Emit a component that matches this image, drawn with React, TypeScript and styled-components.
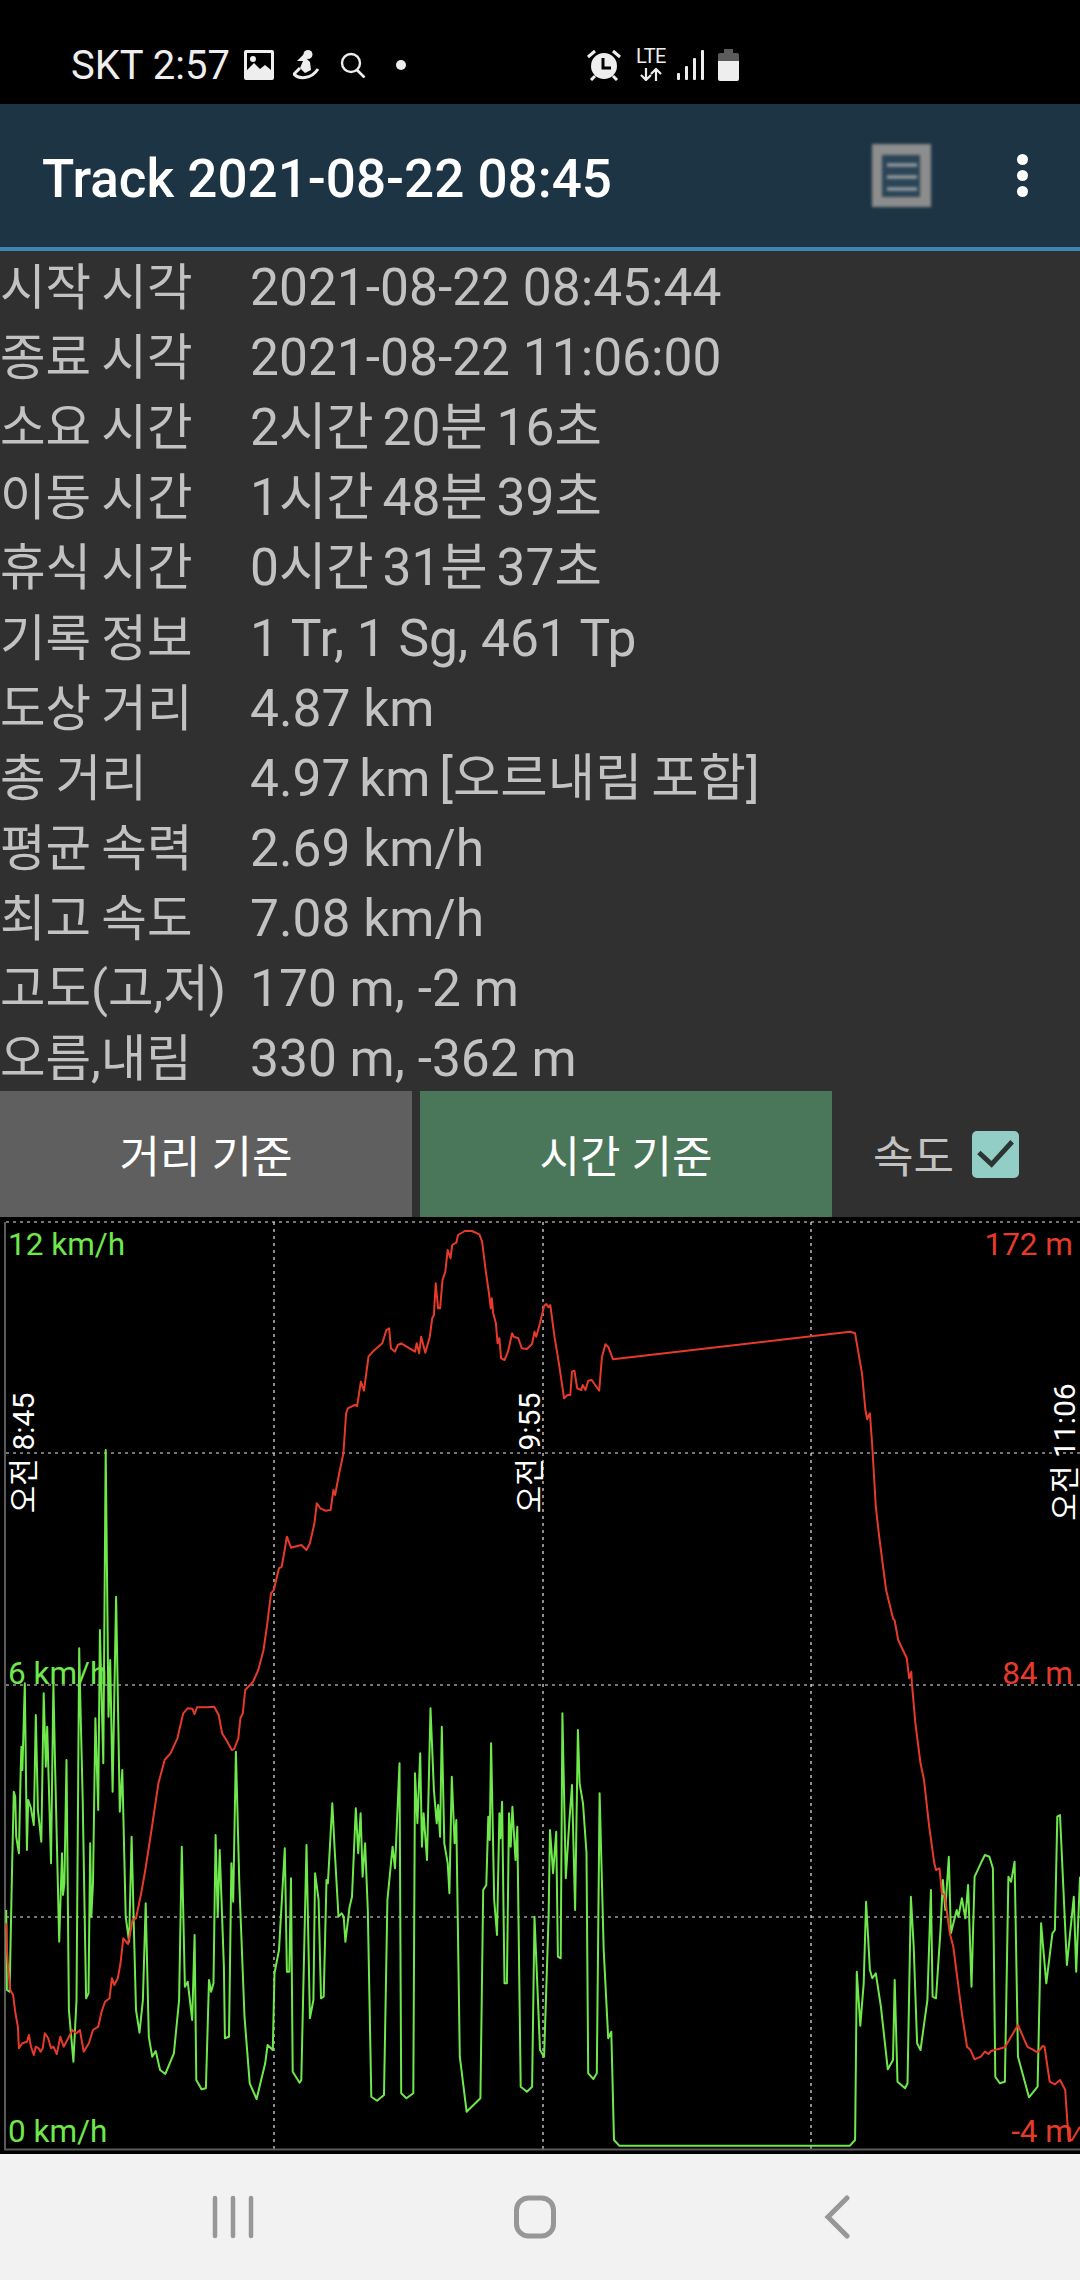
import React from "react";
import styled, { createGlobalStyle } from "styled-components";

// Chart traces were sampled on a 1568x1500 grid per tile of the chart area.
type Tile = [number, number, number[]];

const CHART_TOP = 1217;
const TILE_SCALE_X = 540 / 1568;

const toPoints = (tiles: Tile[]) =>
    tiles
        .map(([ox, oy, values]) => {
            const out: string[] = [];
            for (let i = 0; i < values.length; i += 2) {
                const x = ox + values[i] * TILE_SCALE_X;
                const y = oy + values[i + 1] / 3 - CHART_TOP;
                out.push(`${x.toFixed(1)},${y.toFixed(1)}`);
            }
            return out.join(" ");
        })
        .join(" ");

const altitude: Tile[] = [
    [0, 1650, [
        18,820, 20,900, 24,960, 30,1020, 38,1035, 44,1085, 52,1130, 55,1195, 65,1180, 78,1175, 84,1155, 90,1190,
        98,1215, 104,1190, 112,1195, 118,1205, 124,1195, 130,1150, 140,1165, 148,1195, 155,1190, 165,1212, 175,1160,
        185,1190, 198,1165, 210,1140, 222,1150, 232,1140, 243,1205, 258,1180, 270,1140, 285,1130, 295,1085, 305,1055,
        318,1045, 325,985, 332,1005, 342,985, 350,940, 358,865, 372,882, 385,810, 395,805, 410,730, 422,660, 440,540,
        460,400, 478,330, 495,310, 515,265, 532,190, 545,175, 558,176, 565,192, 572,172, 600,172, 622,170, 635,195,
        645,250, 660,275, 673,300, 680,297, 692,265, 698,205, 705,190, 712,120, 735,95, 750,60, 765,0,
    ]],
    [0, 1200, [
        775,1280, 787,1180, 795,1170, 810,1105, 818,1100, 825,1060, 833,1010, 845,1043, 875,1035, 890,1050, 900,1030,
        913,970, 920,910, 930,925, 945,932, 960,930, 968,870, 973,885, 985,820, 997,760, 1005,640, 1010,625, 1030,615,
        1037,618, 1048,545, 1057,572, 1070,470, 1085,452, 1110,430, 1122,390, 1130,385, 1135,445, 1147,455, 1155,435,
        1165,430, 1205,455, 1210,430, 1217,460, 1223,410, 1235,458, 1248,410, 1255,355, 1260,345, 1265,250, 1272,325,
        1278,325, 1285,240, 1293,215, 1300,150, 1308,175, 1313,135, 1325,128, 1330,105, 1350,93, 1370,93, 1392,103,
        1400,125, 1410,210, 1420,280, 1425,325, 1428,295, 1432,340, 1440,370, 1445,430, 1450,415, 1455,475, 1465,480,
        1475,455, 1487,400, 1492,410, 1505,415, 1515,445, 1530,447, 1545,432, 1552,395, 1557,410, 1568,370,
    ]],
    [540, 1200, [
        12,318, 18,312, 25,322, 30,315, 42,410, 55,490, 70,595, 80,585, 88,585, 93,515, 100,512, 108,565, 120,570,
        124,555, 132,570, 140,542, 150,540, 172,572, 180,470, 190,433, 198,440, 212,478, 900,395, 915,400, 920,430,
        935,520, 945,630, 950,658, 955,645, 958,640, 965,740, 975,920, 985,1010, 1005,1170, 1025,1255, 1030,1262,
        1040,1320, 1065,1375, 1072,1435, 1078,1415, 1080,1450,
    ]],
    [540, 1650, [
        1080,100, 1090,220, 1105,340, 1115,390, 1130,530, 1145,640, 1150,660, 1160,655, 1167,730, 1175,735, 1190,850,
        1200,890, 1210,970, 1225,1090, 1240,1190, 1250,1200, 1262,1228, 1280,1220, 1292,1205, 1302,1212, 1310,1203,
        1350,1192, 1388,1125, 1415,1190, 1445,1207, 1460,1188, 1465,1190, 1480,1295, 1495,1303, 1510,1290, 1525,1320,
        1535,1470, 1545,1470, 1568,1430,
    ]],
];

const speed: Tile[] = [
    [0, 1650, [
        18,780, 20,1020, 28,1025, 35,650, 40,425, 44,440, 47,560, 55,610, 60,360, 62,290, 65,360, 72,100, 78,600,
        82,450, 90,475, 98,525, 104,195, 110,480, 120,575, 127,130, 133,350, 137,230, 148,640, 155,100, 160,350,
        172,875, 180,610, 183,735, 187,700, 193,330, 200,1080, 213,1235, 222,1050, 230,-5, 232,100, 240,450, 250,1045,
        257,1030, 262,580, 265,800, 270,700, 277,205, 285,480, 290,-60, 300,340, 307,-600, 315,200, 320,30, 327,425,
        337,-160, 348,485, 355,360, 365,800, 375,875, 382,560, 388,800, 395,1080, 405,1148, 415,1050, 423,760, 432,1160,
        442,1220, 452,1203, 465,1260, 480,1272, 505,1210, 520,1050, 528,590, 537,1010, 545,995, 558,1110, 565,855,
        570,1290, 585,1318, 598,1315, 607,990, 613,1025, 620,1000, 626,555, 632,800, 638,600, 650,950, 653,1165,
        665,1160, 672,640, 677,755, 685,305, 695,700, 710,1100, 725,1300, 745,1347, 770,1240, 777,1185, 792,1200,
        797,970, 810,900, 827,595, 833,965, 840,965, 845,685, 850,1265, 870,1298, 875,1290, 890,585, 900,1105, 910,1050,
        915,670, 925,750, 932,1045, 940,1040, 948,690, 952,700, 965,460, 972,600, 983,800, 992,790, 998,800, 1003,875,
        1015,770, 1022,740, 1033,475, 1040,610, 1047,490, 1053,680, 1060,580, 1068,780, 1078,1340, 1095,1352, 1115,1335,
        1125,750, 1140,590, 1147,655, 1160,340, 1165,1330, 1180,1345, 1200,1330, 1205,370, 1212,520, 1220,310, 1225,590,
        1230,490, 1240,630, 1250,175, 1260,420, 1268,520, 1272,465, 1278,560, 1283,230, 1290,580, 1300,640, 1305,730,
        1312,380, 1320,580, 1325,510, 1335,1220, 1355,1385, 1395,1345, 1403,720, 1412,705, 1418,500, 1422,570, 1426,280,
        1435,750, 1443,855, 1450,490, 1453,565, 1458,455, 1465,1000, 1472,1000, 1478,490, 1483,590, 1488,470, 1497,630,
        1502,530, 1512,1310, 1530,1325, 1545,1310, 1552,800, 1568,1200,
    ]],
    [540, 1650, [
        12,1220, 25,800, 29,540, 38,670, 47,545, 52,920, 60,925, 65,190, 75,685, 85,515, 93,405, 102,780, 110,240,
        115,400, 125,460, 135,610, 140,1270, 155,1287, 165,1270, 173,430, 185,900, 198,1165, 207,1145, 215,1470,
        230,1487, 900,1487, 915,1470, 920,965, 930,1127, 940,1000, 947,755, 958,960, 965,985, 975,970, 990,1070,
        1010,1258, 1025,1230, 1030,990, 1038,1295, 1060,1315, 1067,1300, 1077,740, 1085,890, 1095,1180, 1105,1200,
        1125,1050, 1135,720, 1140,1040, 1150,1045, 1163,840, 1170,690, 1177,780, 1187,620, 1193,850, 1210,780, 1215,800,
        1225,745, 1235,805, 1243,705, 1253,1010, 1262,680, 1280,640, 1292,615, 1305,620, 1315,655, 1322,1280, 1335,1300,
        1350,1295, 1360,680, 1368,695, 1378,635, 1388,1220, 1420,1342, 1445,1310, 1455,820, 1470,1000, 1488,850,
        1495,840, 1502,500, 1510,495, 1530,945, 1550,740, 1557,965, 1568,680,
    ]],
];

const infoRows = [
    ["시작 시각", "2021-08-22 08:45:44"],
    ["종료 시각", "2021-08-22 11:06:00"],
    ["소요 시간", "2시간 20분 16초"],
    ["이동 시간", "1시간 48분 39초"],
    ["휴식 시간", "0시간 31분 37초"],
    ["기록 정보", "1 Tr, 1 Sg, 461 Tp"],
    ["도상 거리", "4.87 km"],
    ["총 거리", "4.97 km [오르내림 포함]"],
    ["평균 속력", "2.69 km/h"],
    ["최고 속도", "7.08 km/h"],
    ["고도(고,저)", "170 m, -2 m"],
    ["오름,내림", "330 m, -362 m"],
];

const hasHangul = (text: string) => /[가-힣]/.test(text);

const gridRows = [5, 236, 468, 700];
const gridCols = [274, 543, 811];

export default function App() {
    return (
        <>
            <GlobalStyle />
            <Screen>
                <StatusBar>
                    <Carrier>SKT 2:57</Carrier>
                    <PictureIcon viewBox="0 0 30 30">
                        <path
                            fillRule="evenodd"
                            d="M2 0h26a2 2 0 0 1 2 2v26a2 2 0 0 1-2 2H2a2 2 0 0 1-2-2V2a2 2 0 0 1 2-2zM3 3v17l7-7 6 6 5-4 6 5V3z"
                            fill="#eee"
                        />
                        <circle cx="9" cy="9" r="3" fill="#eee" />
                    </PictureIcon>
                    <FigureIcon viewBox="0 0 27 30">
                        <circle cx="15" cy="4.5" r="4.5" fill="#eee" />
                        <path d="M11 4 4 11h6l-3 7 5 5 6-3-1-8-3-3z" fill="#eee" />
                        <path d="M7 18 1 24c4 5 17 6 24-5" fill="none" stroke="#eee" strokeWidth="3" />
                    </FigureIcon>
                    <SearchIcon viewBox="0 0 26 26">
                        <circle cx="11" cy="11" r="9" fill="none" stroke="#eee" strokeWidth="2.4" />
                        <path d="m17 18 7.5 7.5" stroke="#eee" strokeWidth="2.6" />
                    </SearchIcon>
                    <StatusDot />
                    <SystemIcons>
                        <AlarmIcon viewBox="0 0 34 32">
                            <circle cx="17" cy="17" r="13" fill="#eee" />
                            <path d="M1 8 8 2M33 8l-7-6M8 27l-4 4M26 27l4 4" stroke="#eee" strokeWidth="3" />
                            <path d="M16 9v10h8" fill="none" stroke="#000" strokeWidth="3" />
                        </AlarmIcon>
                        <NetworkBadge>
                            <NetworkText>LTE</NetworkText>
                            <ArrowsIcon viewBox="0 0 24 13">
                                <path d="M7 0v11M2 7l5 5 5-5M17 13V2M12 6l5-5 5 5" fill="none" stroke="#eee" strokeWidth="2.2" />
                            </ArrowsIcon>
                        </NetworkBadge>
                        <SignalIcon viewBox="0 0 28 30">
                            <rect x="0" y="23" width="3" height="7" rx="1" fill="#eee" />
                            <rect x="8" y="16" width="3" height="14" rx="1" fill="#eee" />
                            <rect x="16" y="8" width="3" height="22" rx="1" fill="#eee" />
                            <rect x="24" y="0" width="3" height="30" rx="1" fill="#eee" />
                        </SignalIcon>
                        <BatteryIcon viewBox="0 0 21 32">
                            <path d="M6 0h9v4h4a2 2 0 0 1 2 2v7H0V6a2 2 0 0 1 2-2h4z" fill="#5b5b5b" />
                            <path d="M0 12h21v18a2 2 0 0 1-2 2H2a2 2 0 0 1-2-2z" fill="#eee" />
                        </BatteryIcon>
                    </SystemIcons>
                </StatusBar>

                <ActionBar>
                    <Title>Track 2021-08-22 08:45</Title>
                    <ListButton viewBox="0 0 59 63">
                        <rect width="59" height="63" fill="#8d8d8d" />
                        <rect x="10" y="11" width="38" height="42" fill="#2b4557" />
                        <path d="M15 21h30M15 33h30M15 45h30" stroke="#a4a8aa" strokeWidth="3" />
                    </ListButton>
                    <OverflowButton>
                        <OverflowDot />
                        <OverflowDot />
                        <OverflowDot />
                    </OverflowButton>
                </ActionBar>

                <InfoList>
                    {infoRows.map(([label, value]) => (
                        <InfoRow key={label}>
                            <InfoLabel>{label}</InfoLabel>
                            <InfoValue $tight={hasHangul(value)}>{value}</InfoValue>
                        </InfoRow>
                    ))}
                </InfoList>

                <ModeBar>
                    <ModeButton>거리 기준</ModeButton>
                    <ModeButton $active>시간 기준</ModeButton>
                    <SpeedToggle>
                        속도
                        <CheckBox viewBox="0 0 48 48">
                            <rect width="48" height="48" rx="5" fill="#92cdc6" />
                            <path d="m7 22 13 12L41 11" fill="none" stroke="#2d3436" strokeWidth="5" />
                        </CheckBox>
                    </SpeedToggle>
                </ModeBar>

                <Chart>
                    <Plot>
                        {gridRows.map((y) => (
                            <GridLine key={y} x1={6} x2={1080} y1={y} y2={y} />
                        ))}
                        {gridCols.map((x) => (
                            <GridLine key={x} x1={x} x2={x} y1={5} y2={932} />
                        ))}
                        <Axis d="M5 5V932.5H1080" />
                        <Trace points={toPoints(speed)} stroke="#6fe84b" />
                        <Trace points={toPoints(altitude)} stroke="#e63a2a" />
                    </Plot>
                    <SpeedLabel $top={8}>12 km/h</SpeedLabel>
                    <SpeedLabel $top={437}>6 km/h</SpeedLabel>
                    <SpeedLabel $top={895}>0 km/h</SpeedLabel>
                    <AltitudeLabel $top={8}>172 m</AltitudeLabel>
                    <AltitudeLabel $top={437}>84 m</AltitudeLabel>
                    <AltitudeLabel $top={895}>-4 m</AltitudeLabel>
                    <TimeLabel $x={24} $y={236}>오전 8:45</TimeLabel>
                    <TimeLabel $x={530} $y={236}>오전 9:55</TimeLabel>
                    <TimeLabel $x={1065} $y={235}>오전 11:06</TimeLabel>
                </Chart>

                <NavBar>
                    <NavIcon viewBox="0 0 42 44">
                        <path d="M3 3v38M21 3v38M39 3v38" fill="none" stroke="#979797" strokeWidth="4.5" strokeLinecap="round" />
                    </NavIcon>
                    <NavIcon viewBox="0 0 42 44">
                        <rect x="2.5" y="3" width="37" height="38" rx="12" fill="none" stroke="#979797" strokeWidth="5" />
                    </NavIcon>
                    <NavIcon viewBox="0 0 42 44">
                        <path d="M31 3 12 22l19 19" fill="none" stroke="#979797" strokeWidth="5" strokeLinecap="round" />
                    </NavIcon>
                </NavBar>
            </Screen>
        </>
    );
}

const GlobalStyle = createGlobalStyle`
    html, body {
        margin: 0;
        padding: 0;
        background: #000;
    }
`;

const Screen = styled.div`
    width: 1080px;
    height: 2280px;
    display: flex;
    flex-direction: column;
    background-color: #303030;
    font-family: Roboto, "Noto Sans CJK KR", sans-serif;
    overflow: hidden;
`;

const StatusBar = styled.div`
    height: 104px;
    flex: none;
    box-sizing: border-box;
    display: flex;
    align-items: center;
    padding: 26px 0 0 71px;
    background-color: #000;
`;

const Carrier = styled.span`
    width: 173px;
    color: #eee;
    font-size: 40px;
    white-space: nowrap;
`;

const PictureIcon = styled.svg`
    width: 30px;
    height: 30px;
    flex: none;
`;

const FigureIcon = styled.svg`
    width: 27px;
    height: 30px;
    flex: none;
    margin-left: 19px;
`;

const SearchIcon = styled.svg`
    width: 26px;
    height: 26px;
    flex: none;
    margin-left: 20px;
`;

const StatusDot = styled.span`
    width: 10px;
    height: 10px;
    flex: none;
    margin-left: 30px;
    border-radius: 50%;
    background-color: #eee;
`;

const SystemIcons = styled.div`
    display: flex;
    align-items: center;
    margin-left: 181px;
`;

const AlarmIcon = styled.svg`
    width: 34px;
    height: 32px;
`;

const NetworkBadge = styled.div`
    width: 30px;
    margin-left: 15px;
    display: flex;
    flex-direction: column;
    align-items: center;
    gap: 4px;
`;

const NetworkText = styled.span`
    color: #eee;
    font-size: 20px;
    line-height: 15px;
    letter-spacing: -0.5px;
`;

const ArrowsIcon = styled.svg`
    width: 24px;
    height: 13px;
`;

const SignalIcon = styled.svg`
    width: 28px;
    height: 30px;
    margin-left: 11px;
`;

const BatteryIcon = styled.svg`
    width: 21px;
    height: 32px;
    margin-left: 13px;
`;

const ActionBar = styled.div`
    height: 143px;
    flex: none;
    display: flex;
    align-items: center;
    padding-left: 42px;
    background-color: #1d3445;
    border-bottom: 4px solid #3d86b4;
`;

const Title = styled.h1`
    flex: 1;
    margin: 6px 0 0;
    color: #fff;
    font-size: 53px;
    font-weight: 500;
    white-space: nowrap;
`;

const ListButton = styled.svg`
    width: 59px;
    height: 63px;
    flex: none;
    filter: blur(1.4px);
`;

const OverflowButton = styled.div`
    width: 11px;
    flex: none;
    margin: 0 52px 0 86px;
    display: flex;
    flex-direction: column;
    gap: 5px;
`;

const OverflowDot = styled.span`
    width: 11px;
    height: 11px;
    border-radius: 50%;
    background-color: #fff;
`;

const InfoList = styled.div`
    height: 840px;
    flex: none;
    box-sizing: border-box;
    padding-top: 2px;
    display: flex;
    flex-direction: column;
`;

const InfoRow = styled.div`
    height: 70.1px;
    flex: none;
    display: grid;
    grid-template-columns: 250px 1fr;
    align-items: center;
`;

const InfoLabel = styled.span`
    color: #c2c2c2;
    font-size: 49.5px;
    line-height: 60px;
    word-spacing: -2px;
    white-space: nowrap;
`;

const InfoValue = styled.span<{ $tight: boolean }>`
    color: #c2c2c2;
    font-size: 51.5px;
    line-height: 60px;
    word-spacing: ${({ $tight }) => ($tight ? "-4px" : "0")};
    white-space: nowrap;
`;

const ModeBar = styled.div`
    height: 126px;
    flex: none;
    display: flex;
    gap: 8px;
`;

const ModeButton = styled.div<{ $active?: boolean }>`
    width: 412px;
    display: flex;
    align-items: center;
    justify-content: center;
    color: #fff;
    font-size: 44px;
    background-color: ${({ $active }) => ($active ? "#4a7759" : "#5f5f5f")};
`;

const SpeedToggle = styled.div`
    flex: 1;
    display: flex;
    align-items: center;
    padding-left: 33px;
    gap: 18px;
    color: #c2c2c2;
    font-size: 44px;
`;

const CheckBox = styled.svg`
    width: 47px;
    height: 47px;
    flex: none;
`;

const Chart = styled.div`
    position: relative;
    flex: 1;
    background-color: #000;
    overflow: hidden;
`;

const Plot = styled.svg`
    position: absolute;
    inset: 0;
    width: 100%;
    height: 100%;
`;

const GridLine = styled.line`
    stroke: #e8e8e8;
    stroke-width: 1.2;
    stroke-dasharray: 3 4;
`;

const Axis = styled.path`
    fill: none;
    stroke: #5a5a5a;
    stroke-width: 2;
`;

const Trace = styled.polyline`
    fill: none;
    stroke-width: 2;
    stroke-linejoin: round;
`;

const SpeedLabel = styled.span<{ $top: number }>`
    position: absolute;
    left: 8px;
    top: ${({ $top }) => $top}px;
    color: #6fe84b;
    font-size: 31.5px;
    line-height: 40px;
    white-space: nowrap;
`;

const AltitudeLabel = styled.span<{ $top: number }>`
    position: absolute;
    right: 7px;
    top: ${({ $top }) => $top}px;
    color: #e63a2a;
    font-size: 31.5px;
    line-height: 40px;
    white-space: nowrap;
`;

// Time stamps read bottom to top, running along the vertical grid lines
const TimeLabel = styled.span<{ $x: number; $y: number }>`
    position: absolute;
    left: ${({ $x }) => $x}px;
    top: ${({ $y }) => $y}px;
    color: #fff;
    font-size: 30px;
    line-height: 26px;
    white-space: nowrap;
    writing-mode: vertical-rl;
    text-orientation: sideways;
    transform: translate(-50%, -50%) rotate(180deg);
`;

const NavBar = styled.div`
    height: 126px;
    flex: none;
    box-sizing: border-box;
    display: flex;
    align-items: center;
    justify-content: center;
    gap: 260px;
    padding-right: 10px;
    background-color: #f2f2f2;
`;

const NavIcon = styled.svg`
    width: 42px;
    height: 44px;
    flex: none;
`;
